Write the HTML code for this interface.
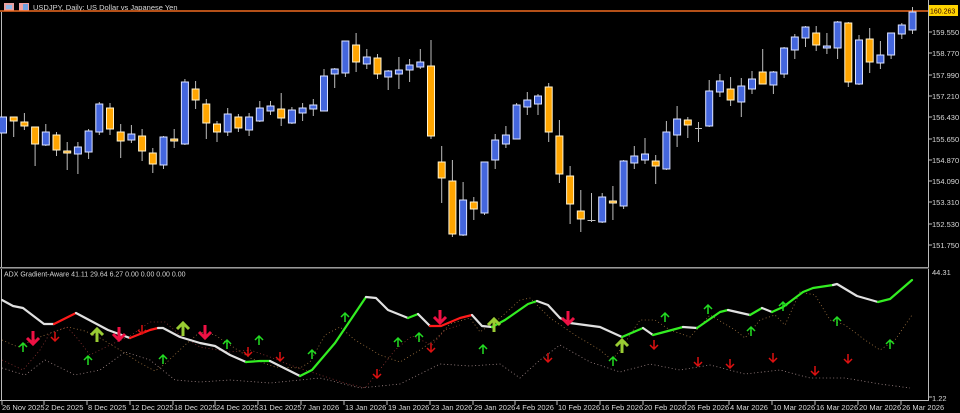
<!DOCTYPE html>
<html><head><meta charset="utf-8"><style>
html,body{margin:0;padding:0;background:#000;width:960px;height:413px;overflow:hidden}
svg{display:block}
text{font-family:"Liberation Sans",sans-serif;font-size:7.5px;fill:#d8d8d8}
.w{stroke:#bdbdbd;stroke-width:1}
.b{fill:#4466dd;stroke:#dde3ff;stroke-width:1}
.o{fill:#ffa500;stroke:#fff3d0;stroke-width:1}
</style></head><body>
<svg width="960" height="413" viewBox="0 0 960 413" xmlns="http://www.w3.org/2000/svg">
<rect width="960" height="413" fill="#000"/>
<rect x="4" y="3" width="10" height="8" fill="#e9a0a0"/><rect x="6" y="5" width="6" height="4" fill="#8fb8e8"/>
<rect x="19" y="3" width="10" height="8" fill="#f0a0a0"/><rect x="23" y="4" width="5" height="6" fill="#6fa0e0"/>
<text x="33" y="10" style="font-size:7.5px">USDJPY, Daily:  US Dollar vs Japanese Yen</text>
<line x1="1.5" y1="12" x2="1.5" y2="400" stroke="#bbb"/>
<line x1="928.5" y1="0" x2="928.5" y2="400" stroke="#bbb"/>
<line x1="0" y1="267.5" x2="929" y2="267.5" stroke="#999"/>
<line x1="0" y1="268.5" x2="929" y2="268.5" stroke="#555"/>
<line x1="0" y1="400.5" x2="929" y2="400.5" stroke="#bbb"/>
<line x1="0" y1="11" x2="928" y2="11" stroke="#f06a20" stroke-width="1.5"/>
<rect x="929" y="5" width="29" height="11" fill="#ffd400"/>
<text x="930" y="13.5" style="fill:#300;font-size:7px">160.263</text>
<g stroke="#bbb"><line x1="928" y1="32" x2="932" y2="32"/><line x1="928" y1="53" x2="932" y2="53"/><line x1="928" y1="75" x2="932" y2="75"/><line x1="928" y1="96" x2="932" y2="96"/><line x1="928" y1="117" x2="932" y2="117"/><line x1="928" y1="139" x2="932" y2="139"/><line x1="928" y1="160" x2="932" y2="160"/><line x1="928" y1="181" x2="932" y2="181"/><line x1="928" y1="202" x2="932" y2="202"/><line x1="928" y1="224" x2="932" y2="224"/><line x1="928" y1="245" x2="932" y2="245"/><line x1="928" y1="397" x2="932" y2="397"/></g>
<g style="font-size:7px">
<text x="932" y="35">159.550</text><text x="932" y="56">158.770</text><text x="932" y="78">157.990</text><text x="932" y="99">157.210</text><text x="932" y="120">156.430</text><text x="932" y="142">155.650</text><text x="932" y="163">154.870</text><text x="932" y="184">154.090</text><text x="932" y="205">153.310</text><text x="932" y="227">152.530</text><text x="932" y="248">151.750</text>
<text x="932" y="275">44.31</text><text x="932" y="401">1.22</text>
</g>
<g stroke="#bbb"><line x1="2" y1="400" x2="2" y2="405"/><line x1="44" y1="400" x2="44" y2="405"/><line x1="87" y1="400" x2="87" y2="405"/><line x1="130" y1="400" x2="130" y2="405"/><line x1="173" y1="400" x2="173" y2="405"/><line x1="215" y1="400" x2="215" y2="405"/><line x1="258" y1="400" x2="258" y2="405"/><line x1="301" y1="400" x2="301" y2="405"/><line x1="344" y1="400" x2="344" y2="405"/><line x1="387" y1="400" x2="387" y2="405"/><line x1="430" y1="400" x2="430" y2="405"/><line x1="473" y1="400" x2="473" y2="405"/><line x1="515" y1="400" x2="515" y2="405"/><line x1="557" y1="400" x2="557" y2="405"/><line x1="600" y1="400" x2="600" y2="405"/><line x1="643" y1="400" x2="643" y2="405"/><line x1="686" y1="400" x2="686" y2="405"/><line x1="729" y1="400" x2="729" y2="405"/><line x1="772" y1="400" x2="772" y2="405"/><line x1="815" y1="400" x2="815" y2="405"/><line x1="858" y1="400" x2="858" y2="405"/><line x1="901" y1="400" x2="901" y2="405"/></g>
<g style="font-size:6.6px">
<text x="2" y="410">26 Nov 2025</text><text x="45" y="410">2 Dec 2025</text><text x="88" y="410">8 Dec 2025</text><text x="131" y="410">12 Dec 2025</text><text x="174" y="410">18 Dec 2025</text><text x="216" y="410">24 Dec 2025</text><text x="259" y="410">31 Dec 2025</text><text x="302" y="410">7 Jan 2026</text><text x="345" y="410">13 Jan 2026</text><text x="388" y="410">19 Jan 2026</text><text x="431" y="410">23 Jan 2026</text><text x="474" y="410">29 Jan 2026</text><text x="516" y="410">4 Feb 2026</text><text x="558" y="410">10 Feb 2026</text><text x="601" y="410">16 Feb 2026</text><text x="644" y="410">20 Feb 2026</text><text x="687" y="410">26 Feb 2026</text><text x="730" y="410">4 Mar 2026</text><text x="773" y="410">10 Mar 2026</text><text x="816" y="410">16 Mar 2026</text><text x="859" y="410">20 Mar 2026</text><text x="902" y="410">26 Mar 2026</text>
</g>
<path class="w" fill="none" d="M13.7 117V137M24.4 113V130M35.1 127V166M45.8 124V146M56.5 132V156M67.2 142V170M77.9 142V174M88.6 129V159M99.3 102V135M110 103V135M120.7 124V158M131.4 125V143M142.1 129V161M152.8 148V173M163.5 136V169M174.2 129V148M184.9 79V145M195.6 81V109M206.3 99V139M217 121V142M227.7 108V136M238.4 114V132M249.1 113V136M259.8 101V122M270.5 101V115M281.2 93V126M291.9 107V124M302.6 103V121M313.3 99V116M324 69V111M334.7 68V88M345.4 41V77M356.1 33V72M366.8 49V69M377.5 54V79M388.2 70V90M398.9 57V89M409.6 59V82M420.3 49V69M431 40V139M441.7 146V203M452.4 160V237M463.1 182V236M473.8 197V220M484.5 162V215M495.2 134V169M505.9 126V148M516.6 103V139M527.3 92V115M538 94V115M548.7 83V142M559.4 120V183M570.1 166V224M580.8 190V232M591.5 193V222M602.2 193V223M612.9 186V220M623.6 160V209M634.3 146V169M645 138V164M655.7 155V184M666.4 121V170M677.1 106V147M687.8 117V138M698.5 122V142M709.2 80V127M719.9 74V97M730.6 77V106M741.3 78V117M752 71V94M762.7 49V84M773.4 71V94M784.1 47V78M794.8 34V59M805.5 26V47M816.2 26V51M826.9 33V54M837.6 21V59M848.3 22V87M859 35V85M869.7 28V73M880.4 41V69M891.1 33V59M901.8 23V39M912.5 7V34M587.5 220.5H595.5M695 128.5H702"/>
<g class="b">
<rect x="-0.5" y="117" width="7" height="16"/><rect x="42.3" y="132" width="7" height="13"/><rect x="74.4" y="147" width="7" height="7"/><rect x="85.1" y="131" width="7" height="21"/><rect x="95.8" y="104" width="7" height="28"/><rect x="127.9" y="134" width="7" height="6"/><rect x="160" y="137" width="7" height="28"/><rect x="181.4" y="82" width="7" height="62"/><rect x="224.2" y="114" width="7" height="18"/><rect x="245.6" y="117" width="7" height="13"/><rect x="256.3" y="108" width="7" height="13"/><rect x="267" y="106" width="7" height="5"/><rect x="288.4" y="110" width="7" height="13"/><rect x="299.1" y="108" width="7" height="5"/><rect x="309.8" y="105" width="7" height="4"/><rect x="320.5" y="76" width="7" height="35"/><rect x="331.2" y="69" width="7" height="5"/><rect x="341.9" y="41" width="7" height="32"/><rect x="363.3" y="57" width="7" height="7"/><rect x="384.7" y="71" width="7" height="6"/><rect x="395.4" y="70" width="7" height="4"/><rect x="406.1" y="65" width="7" height="5"/><rect x="416.8" y="62" width="7" height="5"/><rect x="459.6" y="200" width="7" height="35"/><rect x="481" y="162" width="7" height="51"/><rect x="491.7" y="140" width="7" height="20"/><rect x="502.4" y="135" width="7" height="9"/><rect x="513.1" y="105" width="7" height="34"/><rect x="523.8" y="100" width="7" height="7"/><rect x="534.5" y="96" width="7" height="8"/><rect x="598.7" y="197" width="7" height="25"/><rect x="620.1" y="161" width="7" height="45"/><rect x="630.8" y="156" width="7" height="7"/><rect x="641.5" y="154" width="7" height="6"/><rect x="662.9" y="132" width="7" height="37"/><rect x="673.6" y="119" width="7" height="16"/><rect x="705.7" y="91" width="7" height="35"/><rect x="716.4" y="81" width="7" height="11"/><rect x="737.8" y="86" width="7" height="16"/><rect x="748.5" y="79" width="7" height="10"/><rect x="769.9" y="72" width="7" height="13"/><rect x="780.6" y="48" width="7" height="26"/><rect x="791.3" y="37" width="7" height="13"/><rect x="802" y="27" width="7" height="11"/><rect x="823.4" y="46" width="7" height="2"/><rect x="834.1" y="22" width="7" height="26"/><rect x="855.5" y="40" width="7" height="44"/><rect x="876.9" y="55" width="7" height="8"/><rect x="887.6" y="33" width="7" height="22"/><rect x="898.3" y="25" width="7" height="9"/><rect x="909" y="12" width="7" height="18"/>
</g>
<g class="o">
<rect x="10.2" y="117" width="7" height="4"/><rect x="20.9" y="122" width="7" height="4"/><rect x="31.6" y="127" width="7" height="17"/><rect x="53" y="135" width="7" height="15"/><rect x="63.7" y="151" width="7" height="2"/><rect x="106.5" y="108" width="7" height="21"/><rect x="117.2" y="132" width="7" height="9"/><rect x="138.6" y="136" width="7" height="15"/><rect x="149.3" y="153" width="7" height="11"/><rect x="170.7" y="139" width="7" height="2"/><rect x="192.1" y="89" width="7" height="11"/><rect x="202.8" y="104" width="7" height="19"/><rect x="213.5" y="124" width="7" height="8"/><rect x="234.9" y="117" width="7" height="11"/><rect x="277.7" y="109" width="7" height="9"/><rect x="352.6" y="45" width="7" height="17"/><rect x="374" y="58" width="7" height="16"/><rect x="427.5" y="66" width="7" height="70"/><rect x="438.2" y="162" width="7" height="16"/><rect x="448.9" y="181" width="7" height="53"/><rect x="470.3" y="202" width="7" height="7"/><rect x="545.2" y="87" width="7" height="45"/><rect x="555.9" y="136" width="7" height="38"/><rect x="566.6" y="176" width="7" height="28"/><rect x="577.3" y="211" width="7" height="8"/><rect x="609.4" y="201" width="7" height="2"/><rect x="652.2" y="161" width="7" height="5"/><rect x="684.3" y="120" width="7" height="5"/><rect x="727.1" y="89" width="7" height="11"/><rect x="759.2" y="72" width="7" height="12"/><rect x="812.7" y="33" width="7" height="12"/><rect x="844.8" y="23" width="7" height="59"/><rect x="866.2" y="39" width="7" height="23"/>
</g>
<text x="4" y="276.5" style="font-size:7px">ADX Gradient-Aware 41.11 29.64 6.27 0.00 0.00 0.00 0.00</text>
<g fill="none" stroke-width="0.8" stroke-dasharray="1 2.5" opacity="0.8">
<polyline stroke="#c89050" points="2,340 18,347 33,340 45,335 68,327 85,331 100,338 120,350 140,363 155,371 165,364 185,345 200,332 215,335 230,345 250,358 275,367 300,368 310,362 325,335 340,327 355,340 380,355 400,362 420,350 437,338 450,324 470,318 480,332 500,318 520,300 530,298 550,318 575,335 600,350 612,360 620,350 640,320 655,320 670,330 690,337 710,315 735,330 745,338 760,320 775,315 785,325 800,292 815,295 830,320 845,325 865,340 880,350 895,340 912,315"/>
<polyline stroke="#b04040" points="2,360 23,370 40,350 50,333 67,327 77,338 90,355 110,345 130,336 150,322 165,322 180,335 200,347 230,352 250,350 270,357 290,365 320,375 345,383 365,388 378,372 395,350 412,336 432,345 445,330 460,325"/>
<polyline stroke="#d0b0b0" points="2,368 25,375 45,360 75,375 100,370 125,352 150,360 175,380 200,382 230,380 270,383 320,378 360,388 400,384 440,364 470,366 500,364 520,378 540,360 560,345 590,362 620,372 650,364 680,370 710,365 745,374 780,370 810,378 845,378 880,384 910,388"/>
</g>
<g fill="none" stroke-width="2.2" stroke-linejoin="round" stroke-linecap="round">
<polyline stroke="#e0e0e0" points="2,300 13,306 23,308 44,324 54,324"/>
<polyline stroke="#ff1a1a" points="54,324 76,313"/>
<polyline stroke="#e0e0e0" points="76,313 108,330 130,338"/>
<polyline stroke="#ff1a1a" points="130,338 150,330 158,328"/>
<polyline stroke="#e0e0e0" points="158,328 163,328 180,337 200,343 215,346 230,355 246,362"/>
<polyline stroke="#33ee22" points="246,362 260,361 270,361"/>
<polyline stroke="#e0e0e0" points="270,361 300,376"/>
<polyline stroke="#33ee22" points="300,376 312,370 335,343 366,297"/>
<polyline stroke="#e0e0e0" points="366,297 376,298 388,310 408,318"/>
<polyline stroke="#33ee22" points="408,318 418,314"/>
<polyline stroke="#e0e0e0" points="418,314 430,326"/>
<polyline stroke="#ff1a1a" points="430,326 441,326 460,318 472,315"/>
<polyline stroke="#e0e0e0" points="472,315 482,326 492,327"/>
<polyline stroke="#33ee22" points="492,327 505,320 528,304 537,301"/>
<polyline stroke="#e0e0e0" points="537,301 548,305 560,318 570,323 600,327 622,337"/>
<polyline stroke="#33ee22" points="622,337 643,328"/>
<polyline stroke="#e0e0e0" points="643,328 653,335"/>
<polyline stroke="#33ee22" points="653,335 683,327"/>
<polyline stroke="#e0e0e0" points="683,327 697,328"/>
<polyline stroke="#33ee22" points="697,328 720,312 728,310"/>
<polyline stroke="#e0e0e0" points="728,310 750,315"/>
<polyline stroke="#33ee22" points="750,315 762,308"/>
<polyline stroke="#e0e0e0" points="762,308 772,312"/>
<polyline stroke="#33ee22" points="772,312 783,307 803,292 813,288 833,285"/>
<polyline stroke="#e0e0e0" points="833,285 837,284 857,296 878,302"/>
<polyline stroke="#33ee22" points="878,302 890,299 912,280"/>
</g>
<g fill="none" stroke="#22dd22" stroke-width="1.5">
<path d="M23 352V343M19 347L23 343L27 347M88 365V356M84 360L88 356L92 360M163 364V355M159 359L163 355L167 359M227 349V340M223 344L227 340L231 344M259 345V336M255 340L259 336L263 340M312 359V350M308 354L312 350L316 354M345 322V313M341 317L345 313L349 317M398 347V338M394 342L398 338L402 342M419 342V333M415 337L419 333L423 337M483 354V345M479 349L483 345L487 349M613 366V357M609 361L613 357L617 361M665 322V313M661 317L665 313L669 317M708 314V305M704 309L708 305L712 309M751 336V327M747 331L751 327L755 331M783 311V302M779 306L783 302L787 306M837 326V317M833 321L837 317L841 321M890 349V340M886 344L890 340L894 344"/>
</g>
<g fill="none" stroke="#dd1111" stroke-width="1.5">
<path d="M55 332V341M51 337L55 341L59 337M142 325V334M138 330L142 334L146 330M248 347V356M244 352L248 356L252 352M280 352V361M276 357L280 361L284 357M377 369V378M373 374L377 378L381 374M431 343V352M427 348L431 352L435 348M548 353V362M544 358L548 362L552 358M654 340V349M650 345L654 349L658 345M698 357V366M694 362L698 366L702 362M730 359V368M726 364L730 368L734 364M773 353V362M769 358L773 362L777 358M815 366V375M811 371L815 375L819 371M848 354V363M844 359L848 363L852 359"/>
</g>
<g fill="none" stroke="#99cc33" stroke-width="3">
<path d="M97 342V329M91 335L97 329L103 335M183 336V323M177 329L183 323L189 329M494 332V319M488 325L494 319L500 325M622 353V340M616 346L622 340L628 346"/>
</g>
<g fill="none" stroke="#ee1144" stroke-width="3">
<path d="M33 331V344M27 338L33 344L39 338M119 327V340M113 334L119 340L125 334M205 325V338M199 332L205 338L211 332M440 310V323M434 317L440 323L446 317M568 311V324M562 318L568 324L574 318"/>
</g>
</svg>
</body></html>
